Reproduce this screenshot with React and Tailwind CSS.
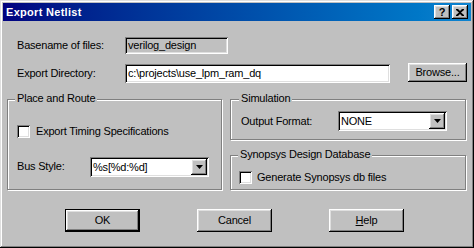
import React from 'react';

// Win98 bevels
const raised = "shadow-[inset_-1px_-1px_0_#000,inset_1px_1px_0_#fff,inset_-2px_-2px_0_#808080,inset_2px_2px_0_#dfdfdf]";
const sunken = "shadow-[inset_1px_1px_0_#808080,inset_-1px_-1px_0_#fff,inset_2px_2px_0_#000,inset_-2px_-2px_0_#dfdfdf]";
const etched = "border border-[#808080] shadow-[inset_1px_1px_0_#fff,1px_1px_0_#fff]";

const Checkbox = () => <div className={`w-[13px] h-[13px] bg-white shrink-0 ${sunken}`} />;

const DropArrow = () => (
  <div className={`w-[16px] h-full bg-[#c0c0c0] flex items-center justify-center ${raised}`}>
    <svg width="7" height="4" viewBox="0 0 7 4">
      <path d="M0 0h7L3.5 4z" fill="#000" />
    </svg>
  </div>
);

const Select = ({ value, width }) => (
  <div className={`h-[20px] bg-white flex p-[2px] ${sunken}`} style={{ width }}>
    <span className="flex-1 pl-[1px] leading-[16px]">{value}</span>
    <DropArrow />
  </div>
);

const Group = ({ title, className, labelLeft, children }) => (
  <div className={`relative ${etched} ${className}`}>
    <span className={`absolute -top-[8px] ${labelLeft} px-[2px] bg-[#c0c0c0] leading-[13px]`}>{title}</span>
    {children}
  </div>
);

const Button = ({ children, isDefault }) => (
  <div className={`w-[75px] h-[23px] ${isDefault ? 'border border-black' : ''}`}>
    <div className={`w-full h-full flex items-center justify-center bg-[#c0c0c0] ${raised}`}>{children}</div>
  </div>
);

export default function App() {
  return (
    <div className={`w-[474px] h-[248px] bg-[#c0c0c0] p-[3px] flex flex-col text-[11px] tracking-[-0.2px] text-black font-['Liberation_Sans',Arial,sans-serif] shadow-[inset_-1px_-1px_0_#000,inset_1px_1px_0_#dfdfdf,inset_-2px_-2px_0_#808080,inset_2px_2px_0_#fff]`}>
      {/* Title bar */}
      <div className="h-[18px] flex items-center pl-[3px] pr-[3px] bg-gradient-to-r from-[#000080] to-[#1084d0]">
        <span className="text-white font-bold tracking-[0.3px]">Export Netlist</span>
        <div className="ml-auto flex gap-[2px]">
          <div className={`w-[16px] h-[14px] bg-[#c0c0c0] flex items-center justify-center font-bold text-[11px] leading-none ${raised}`}>?</div>
          <div className={`w-[16px] h-[14px] bg-[#c0c0c0] flex items-center justify-center ${raised}`}>
            <svg width="8" height="7" viewBox="0 0 8 7">
              <path d="M0 0h2l2 2 2-2h2v1L5 3.5 8 6v1H6L4 5 2 7H0V6l3-2.5L0 1z" fill="#000" />
            </svg>
          </div>
        </div>
      </div>

      {/* Basename */}
      <div className="mt-[16px] flex items-center h-[17px] pl-[14px]">
        <span className="w-[108px]">Basename of files:</span>
        <div className={`w-[103px] h-[17px] bg-[#c0c0c0] pl-[3px] leading-[17px] ${sunken}`}>verilog_design</div>
      </div>

      {/* Export dir */}
      <div className="mt-[10px] flex items-center h-[19px] pl-[14px]">
        <span className="w-[108px]">Export Directory:</span>
        <div className={`w-[265px] h-[19px] bg-white pl-[3px] leading-[19px] ${sunken}`}>c:\projects\use_lpm_ram_dq</div>
        <div className="ml-[18px] -mt-[2px]">
          <div className={`w-[59px] h-[19px] flex items-center justify-center bg-[#c0c0c0] ${raised}`}>Browse...</div>
        </div>
      </div>

      {/* Groups */}
      <div className="mt-[16px] flex pl-[4px]">
        <Group title="Place and Route" labelLeft="left-[7px]" className="w-[215px] h-[91px] pt-[23px] pl-[9px]">
          <div className="flex items-center gap-[6px]">
            <Checkbox />
            <span>Export Timing Specifications</span>
          </div>
          <div className="mt-[17px] flex items-center">
            <span className="w-[73px]">Bus Style:</span>
            <Select value="%s[%d:%d]" width={119} />
          </div>
        </Group>

        <div className="ml-[8px] flex flex-col">
          <Group title="Simulation" labelLeft="left-[8px]" className="w-[236px] h-[41px] pt-[11px] pl-[10px]">
            <div className="flex items-center">
              <span className="w-[97px]">Output Format:</span>
              <Select value="NONE" width={109} />
            </div>
          </Group>
          <Group title="Synopsys Design Database" labelLeft="left-[7px]" className="mt-[15px] w-[236px] h-[35px] pt-[13px] pl-[8px]">
            <div className="flex items-center gap-[5px]">
              <Checkbox />
              <span>Generate Synopsys db files</span>
            </div>
          </Group>
        </div>
      </div>

      {/* Buttons */}
      <div className="mt-[19px] flex gap-[57px] pl-[62px]">
        <Button isDefault>OK</Button>
        <Button>Cancel</Button>
        <Button><span><span className="underline">H</span>elp</span></Button>
      </div>
    </div>
  );
}
